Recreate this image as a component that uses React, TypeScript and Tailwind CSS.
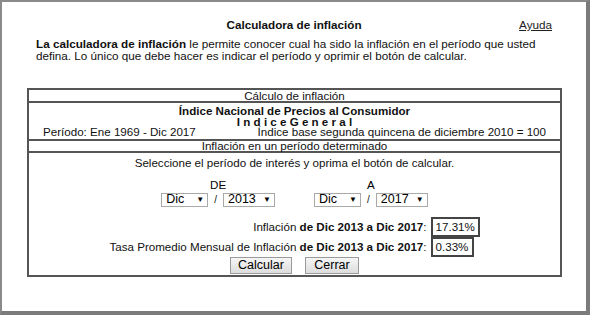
import React from 'react'

const font = { fontFamily: '"Liberation Sans", Arial, sans-serif' }

function FakeSelect({ value, width }: { value: string; width: string }) {
  return (
    <div
      className={`flex h-[14px] items-center justify-between border border-[#a9a9a9] bg-white pl-[4px] pr-[3px] text-[12.5px] leading-none text-black ${width}`}
    >
      <span>{value}</span>
      <span className="text-[8px]">▼</span>
    </div>
  )
}

function PeriodPicker({ label, month, year }: { label: string; month: string; year: string }) {
  return (
    <div className="flex flex-col items-center">
      <span className="h-[12px] leading-[12px] text-black">{label}</span>
      <div className="mt-[1px] flex items-center gap-[6px]">
        <FakeSelect value={month} width="w-[47px]" />
        <span className="text-[10px]">/</span>
        <FakeSelect value={year} width="w-[52px]" />
      </div>
    </div>
  )
}

export default function App() {
  return (
    <div
      style={font}
      className="h-[315px] w-[590px] overflow-hidden border-b-4 border-l-2 border-r-4 border-t-2 border-b-[#7b7b7b] border-l-[#8a8a8a] border-r-[#7b7b7b] border-t-[#8a8a8a] bg-white text-[11.7px] text-[#111]"
    >
      {/* Título + ayuda */}
      <div className="mt-[16px] grid h-[14px] grid-cols-[1fr_auto_1fr] items-center leading-[14px]">
        <div />
        <div className="font-bold">Calculadora de inflación</div>
        <div className="flex justify-end pr-[34px]">
          <a href="#" className="text-[#222] underline">
            Ayuda
          </a>
        </div>
      </div>

      <p className="ml-[34px] mt-[6px] w-[514px] leading-[12px]">
        <b>La calculadora de inflación</b> le permite conocer cual ha sido la inflación en el período que usted
        defina. Lo único que debe hacer es indicar el período y oprimir el botón de calcular.
      </p>

      {/* Tabla */}
      <div className="ml-[25px] mt-[26px] w-[535px] border-2 border-[#555] text-[11.6px] text-[#111]">
        <div className="h-[11px] text-center leading-[11px]">Cálculo de inflación</div>

        <div className="h-[38px] border-t-2 border-[#555] px-[14px] pt-[3px] leading-[10.5px]">
          <div className="text-center font-bold">Índice Nacional de Precios al Consumidor</div>
          <div className="text-center font-bold">I n d i c e G e n e r a l</div>
          <div className="flex justify-between">
            <span>Período: Ene 1969 - Dic 2017</span>
            <span>Índice base segunda quincena de diciembre 2010 = 100</span>
          </div>
        </div>

        <div className="h-[12px] border-t-2 border-[#555] text-center leading-[10px]">
          Inflación en un período determinado
        </div>

        <div className="flex h-[124px] flex-col items-center border-t-2 border-[#555] pt-[4px]">
          <div className="leading-[12px]">Seleccione el período de interés y oprima el botón de calcular.</div>

          <div className="mt-[10px] flex items-start gap-[39px]">
            <PeriodPicker label="DE" month="Dic" year="2013" />
            <PeriodPicker label="A" month="Dic" year="2017" />
          </div>

          <div className="mt-[10px] grid grid-cols-[auto_auto] items-center gap-x-[4px]">
            <div className="text-right">
              Inflación <b>de Dic 2013 a Dic 2017</b>:
            </div>
            <div className="flex h-[20px] w-[49px] items-center border-2 border-[#444] px-[3px]">17.31%</div>
            <div className="text-right">
              Tasa Promedio Mensual de Inflación <b>de Dic 2013 a Dic 2017</b>:
            </div>
            <div className="flex h-[20px] w-[43px] items-center border-2 border-[#444] px-[3px]">0.33%</div>
          </div>

          <div className="flex gap-[13px]">
            <button className="h-[17px] w-[62px] border border-[#9a9a9a] bg-gradient-to-b from-[#f6f6f6] to-[#dddddd] text-[12.5px] leading-none text-black">
              Calcular
            </button>
            <button className="h-[17px] w-[54px] border border-[#9a9a9a] bg-gradient-to-b from-[#f6f6f6] to-[#dddddd] text-[12.5px] leading-none text-black">
              Cerrar
            </button>
          </div>
        </div>
      </div>
    </div>
  )
}
